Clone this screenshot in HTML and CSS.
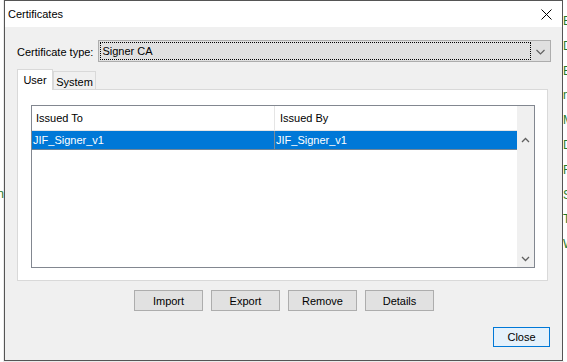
FILE: index.html
```html
<!DOCTYPE html>
<html lang="en">
<head>
    <meta charset="UTF-8">
    <meta name="viewport" content="width=device-width, initial-scale=1.0">
    <title>Certificates</title>
    <link rel="stylesheet" href="styles.css">
</head>
<body>
    <div class="desk">
        <div class="edge edge-left">
            <span class="edge-word">n</span>
        </div>

        <div class="dialog">
            <div class="titlebar">
                <span class="title">Certificates</span>
                <svg class="close-x" width="11" height="11" viewBox="0 0 11 11">
                    <path d="M0.5 0.5 L10.5 10.5 M10.5 0.5 L0.5 10.5" stroke="#000" stroke-width="1" fill="none"/>
                </svg>
            </div>

            <div class="dialog-body">
                <div class="type-row">
                    <label class="type-label">Certificate type:</label>
                    <div class="combo">
                        <span class="combo-value">Signer CA</span>
                        <span class="combo-arrow">
                            <svg width="9" height="6" viewBox="0 0 9 6">
                                <polyline points="0.5,1 4.5,5 8.5,1" stroke="#606060" stroke-width="1.2" fill="none"/>
                            </svg>
                        </span>
                    </div>
                </div>

                <div class="tabs">
                    <div class="tab tab-active">User</div>
                    <div class="tab tab-system">System</div>
                </div>

                <div class="tab-panel">
                    <div class="listview">
                        <div class="list-main">
                            <div class="list-header">
                                <div class="col col-to">Issued To</div>
                                <div class="col col-by">Issued By</div>
                            </div>
                            <div class="list-row selected">
                                <div class="cell cell-to">JIF_Signer_v1</div>
                                <div class="cell cell-by">JIF_Signer_v1</div>
                            </div>
                        </div>
                        <div class="scrollbar">
                            <span class="scroll-btn">
                                <svg width="9" height="6" viewBox="0 0 9 6">
                                    <polyline points="1,5 4.5,1.5 8,5" stroke="#606060" stroke-width="1.3" fill="none"/>
                                </svg>
                            </span>
                            <span class="scroll-btn">
                                <svg width="9" height="6" viewBox="0 0 9 6">
                                    <polyline points="1,1 4.5,4.5 8,1" stroke="#606060" stroke-width="1.3" fill="none"/>
                                </svg>
                            </span>
                        </div>
                    </div>
                </div>

                <div class="actions">
                    <button class="btn">Import</button>
                    <button class="btn">Export</button>
                    <button class="btn">Remove</button>
                    <button class="btn">Details</button>
                </div>

                <div class="footer">
                    <button class="btn btn-default">Close</button>
                </div>
            </div>
        </div>

        <div class="edge edge-right">
            <span>B</span>
            <span>D</span>
            <span>E</span>
            <span>n</span>
            <span>M</span>
            <span>D</span>
            <span>R</span>
            <span>S</span>
            <span>Ta</span>
            <span>W</span>
        </div>
    </div>
</body>
</html>
```

FILE: styles.css
```css
:root {
    --face: #f0f0f0;
    --btn-face: #e1e1e1;
    --btn-border: #adadad;
    --accent: #0078d7;
    --tab-border: #d9d9d9;
    --list-border: #828790;
    --text: #000;
}

* {
    margin: 0;
    padding: 0;
    box-sizing: border-box;
}

body {
    font-family: "Liberation Sans", Arial, sans-serif;
    font-size: 11px;
    color: var(--text);
    background: #fff;
    height: 362px;
    overflow: hidden;
}

.desk {
    display: flex;
    align-items: flex-start;
    height: 362px;
}

/* bits of the window behind the dialog */
.edge {
    width: 4px;
    height: 361px;
    overflow: hidden;
    background: #fff;
    color: #1f7a2a;
    font-size: 12px;
}

.edge-left {
    display: flex;
    justify-content: flex-end;
    padding-top: 187px;
}

.edge-word {
    line-height: 14px;
}

.edge-right {
    display: flex;
    flex-direction: column;
    padding-top: 9px;
    white-space: nowrap;
}

.edge-right span {
    line-height: 24.8px;
}

.dialog {
    width: 559px;
    height: 361px;
    border: 1px solid #555;
    background: var(--face);
    box-shadow: 0 0 0 1px rgba(0, 0, 0, 0.08);
    display: flex;
    flex-direction: column;
}

.titlebar {
    height: 26px;
    background: #fff;
    display: flex;
    align-items: center;
    justify-content: space-between;
    padding-left: 3px;
}

.title {
    font-size: 11px;
}

.close-x {
    margin-right: 10px;
}

.dialog-body {
    flex: 1;
    padding: 13px 11px 0 12px;
}

.type-row {
    display: flex;
    align-items: center;
    gap: 5px;
    height: 22px;
}

.type-label {
    padding-top: 1px;
}

.combo {
    flex: 1;
    height: 22px;
    display: flex;
    border: 1px solid var(--btn-border);
    background: #e0e0e0;
    padding: 1px 0 1px 1px;
}

.combo-value {
    flex: 1;
    border: 1px dotted #000;
    padding-left: 1px;
    display: flex;
    align-items: center;
}

.combo-arrow {
    width: 19px;
    display: flex;
    align-items: center;
    justify-content: center;
    padding-top: 1px;
}

.tabs {
    display: flex;
    align-items: flex-end;
    margin-top: 7px;
    height: 20px;
}

.tab {
    display: flex;
    align-items: center;
    justify-content: center;
    border: 1px solid var(--tab-border);
    border-bottom: none;
}

.tab-active {
    width: 36px;
    height: 21px;
    margin-bottom: -1px;
    background: #fff;
    position: relative;
    z-index: 1;
}

.tab-system {
    width: 43px;
    height: 18px;
    background: var(--face);
    padding-top: 2px;
}

.tab-panel {
    width: 531px;
    height: 192px;
    border: 1px solid var(--tab-border);
    background: #fff;
    padding: 15px 12px 12px 13px;
}

.listview {
    height: 163px;
    border: 1px solid var(--list-border);
    display: flex;
    background: #fff;
}

.list-main {
    flex: 1;
}

.list-header {
    display: flex;
    height: 25px;
    border-bottom: 1px solid #e5e5e5;
}

.col {
    display: flex;
    align-items: center;
    padding-left: 4px;
}

.col-to {
    width: 243px;
    border-right: 1px solid #e5e5e5;
}

.col-by {
    flex: 1;
    padding-left: 5px;
}

.list-row {
    display: flex;
    height: 19px;
}

.list-row.selected {
    background: var(--accent);
    color: #fff;
    border-bottom: 1px solid #6f8599;
}

.cell {
    display: flex;
    align-items: center;
    padding-left: 1px;
}

.cell-to {
    width: 243px;
    border-right: 1px solid #7d8a96;
}

.cell-by {
    flex: 1;
}

.scrollbar {
    width: 17px;
    background: var(--face);
    display: flex;
    flex-direction: column;
    justify-content: space-between;
    padding-top: 25px;
}

.scroll-btn {
    height: 17px;
    display: flex;
    align-items: center;
    justify-content: center;
}

.actions {
    display: flex;
    justify-content: center;
    gap: 8px;
    margin-top: 9px;
}

.btn {
    font-family: inherit;
    font-size: 11px;
    color: var(--text);
    width: 69px;
    height: 21px;
    background: var(--btn-face);
    border: 1px solid var(--btn-border);
}

.footer {
    display: flex;
    justify-content: flex-end;
    margin-top: 16px;
    padding-right: 1px;
}

.btn-default {
    width: 57px;
    height: 20px;
    background: #e5f1fb;
    border-color: var(--accent);
}
```
